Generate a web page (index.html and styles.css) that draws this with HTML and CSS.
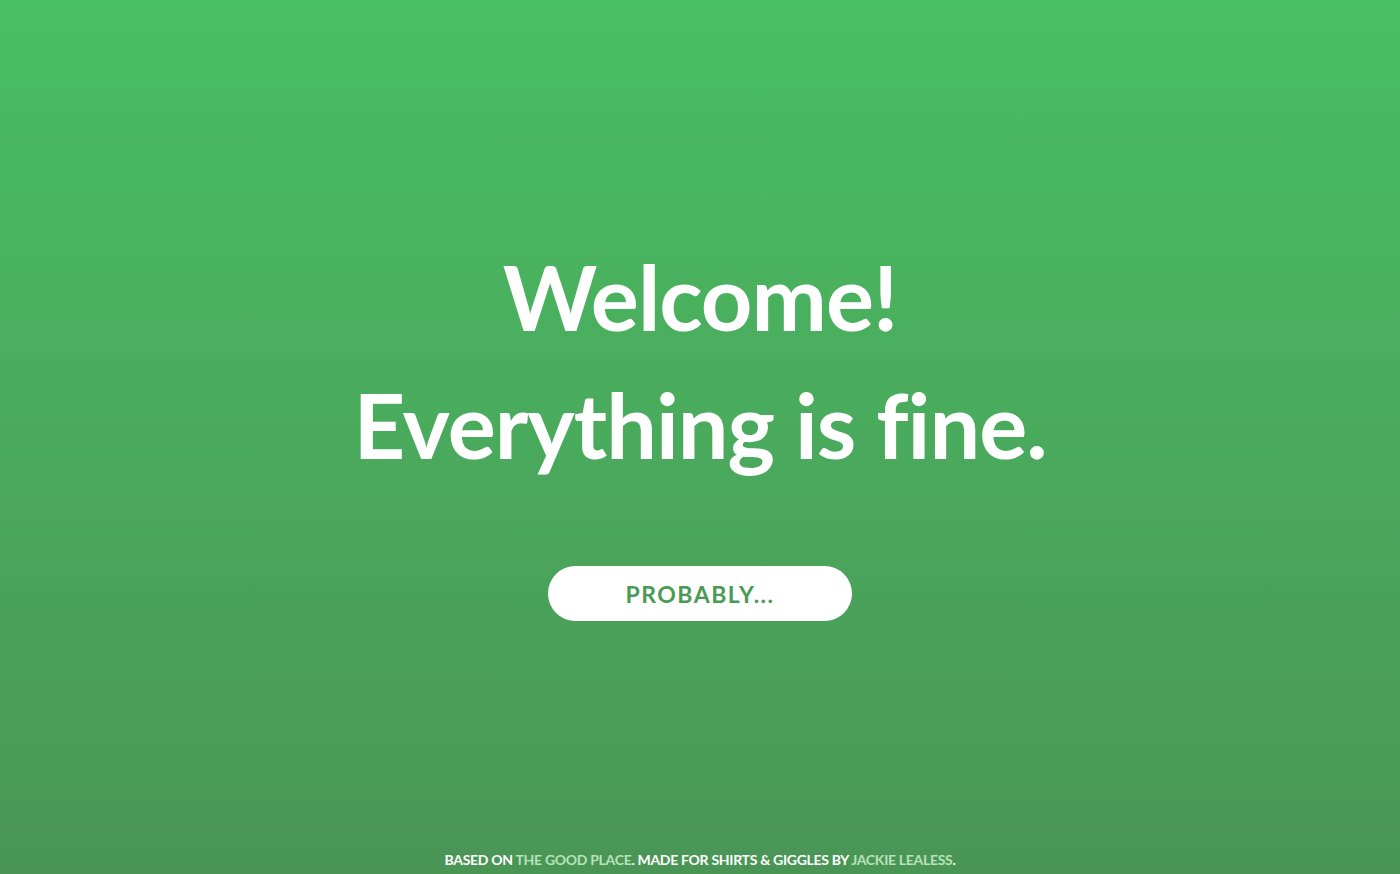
FILE: index.html
```html
<!DOCTYPE html>
<html>
<head>
<meta charset="utf-8">
<link rel="stylesheet" href="styles.css">
</head>
<body>
<main class="page">
  <section class="hero">
    <h1 class="title">Welcome!<br>Everything is fine.</h1>
    <a class="btn" href="#">PROBABLY...</a>
  </section>
  <footer class="footer">BASED ON <a href="#">THE GOOD PLACE</a>. MADE FOR SHIRTS &amp; GIGGLES BY <a href="#">JACKIE LEALESS</a>.</footer>
</main>
</body>
</html>
```
FILE: styles.css
```css
html, body {
  margin: 0;
  padding: 0;
  height: 100%;
}
body {
  font-family: "Lato", "Open Sans", sans-serif;
  background: linear-gradient(to bottom, #49bf63 0%, #4a9556 100%);
  color: #fff;
}
.page {
  height: 874px;
  display: flex;
  flex-direction: column;
  align-items: center;
}
.hero {
  flex: 1;
  display: flex;
  flex-direction: column;
  align-items: center;
  padding-top: 232px;
}
.title {
  margin: 0;
  font-weight: 700;
  font-size: 90px;
  line-height: 128px;
  text-align: center;
  letter-spacing: -1px;
}
.btn {
  margin-top: 78px;
  width: 304px;
  height: 55px;
  border-radius: 28px;
  background: #fff;
  color: #4a9a55;
  display: flex;
  align-items: center;
  justify-content: center;
  font-weight: 700;
  font-size: 23px;
  letter-spacing: 1.5px;
  text-decoration: none;
}
.footer {
  font-weight: 700;
  font-size: 14px;
  padding-bottom: 6px;
  letter-spacing: -0.3px;
}
.footer a {
  color: #b7e2bb;
  text-decoration: none;
}
```
